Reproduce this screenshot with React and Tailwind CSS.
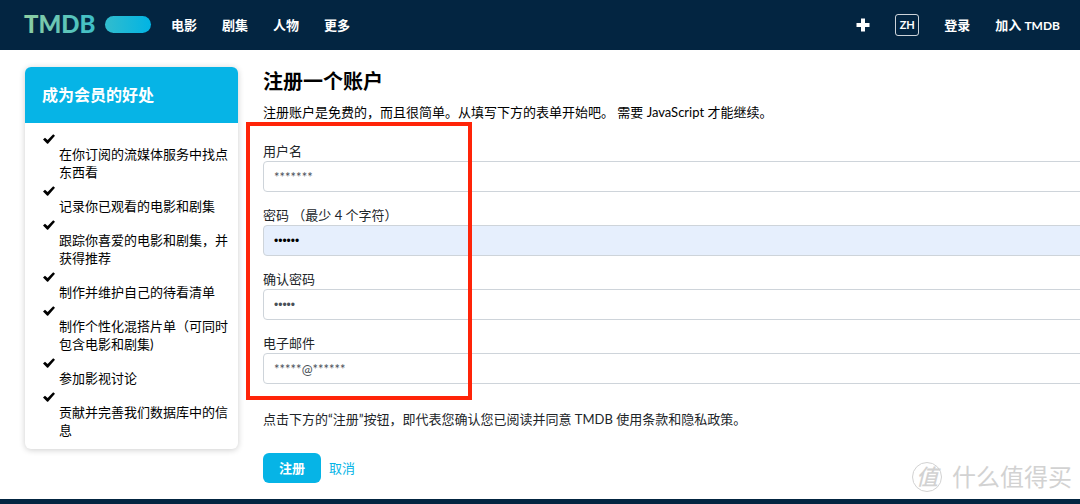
// src/App.jsx
const navLinks = ['电影', '剧集', '人物', '更多'];

const benefits = [
  '在你订阅的流媒体服务中找点东西看',
  '记录你已观看的电影和剧集',
  '跟踪你喜爱的电影和剧集，并获得推荐',
  '制作并维护自己的待看清单',
  '制作个性化混搭片单（可同时包含电影和剧集)',
  '参加影视讨论',
  '贡献并完善我们数据库中的信息',
];

const fields = [
  { id: 'username', label: '用户名', type: 'text', value: '*******' },
  { id: 'password', label: '密码 （最少 4 个字符）', type: 'password', value: '123456', filled: true },
  { id: 'password_confirm', label: '确认密码', type: 'password', value: '12345' },
  { id: 'email', label: '电子邮件', type: 'text', value: '*****@******' },
];

function Logo() {
  return (
    <svg width="127" height="24" viewBox="0 0 127 24" className="overflow-visible" role="img" aria-label="TMDB">
      <defs>
        <linearGradient id="logo" gradientUnits="userSpaceOnUse" x1="0" y1="0" x2="127" y2="0">
          <stop offset="0" stopColor="#90cea1" />
          <stop offset="0.56" stopColor="#3cbec9" />
          <stop offset="1" stopColor="#01b4e4" />
        </linearGradient>
      </defs>
      <text x="0" y="20" fontFamily="Lato, sans-serif" fontSize="24" fontWeight="900" fill="url(#logo)">
        TMDB
      </text>
      <rect x="81" y="3" width="46" height="17" rx="8.5" fill="url(#logo)" />
    </svg>
  );
}

function Check() {
  return (
    <svg width="12" height="10" viewBox="0 0 12 10" aria-hidden="true">
      <path d="M0 5.6 2 3.8 4.6 6 10.2.2 12 1.7 5 9.8H4.2z" />
    </svg>
  );
}

function Header() {
  return (
    <header className="flex h-[50px] items-center justify-between bg-[#032541] pl-6 pr-5 font-bold text-white">
      <div className="flex items-center gap-5">
        <a href="#"><Logo /></a>
        <nav className="flex gap-[25px]">
          {navLinks.map((link) => (
            <a key={link} href="#">{link}</a>
          ))}
        </nav>
      </div>
      <div className="flex items-center gap-[25px]">
        <button type="button" aria-label="添加">
          <svg width="14" height="14" viewBox="0 0 14 14" fill="#fff">
            <path d="M5 .5h4V5h4.5v4H9v4.5H5V9H.5V5H5z" />
          </svg>
        </button>
        <button type="button" className="h-[22px] w-6 rounded-[3px] border border-white/80 text-[11px] leading-5">
          ZH
        </button>
        <a href="#">登录</a>
        <a href="#">加入 <span className="text-xs">TMDB</span></a>
      </div>
    </header>
  );
}

function Benefits() {
  return (
    <aside className="w-[213px] shrink-0 self-start overflow-hidden rounded-md bg-white shadow-[0_1px_6px_rgba(0,0,0,0.2)]">
      <h3 className="bg-[#06b4e6] px-[17px] py-4 text-base leading-6 font-bold text-white">
        成为会员的好处
      </h3>
      <ul className="pt-1.5 pr-2 pb-2.5 pl-[18px]">
        {benefits.map((item) => (
          <li key={item}>
            <div className="flex h-4 items-center pt-1">
              <Check />
            </div>
            <p className="pl-4">{item}</p>
          </li>
        ))}
      </ul>
    </aside>
  );
}

function SignupForm() {
  return (
    <main className="min-w-0 flex-1">
      <h2 className="text-xl leading-7 font-bold">注册一个账户</h2>
      <p className="mt-2">
        注册账户是免费的，而且很简单。从填写下方的表单开始吧。 需要 JavaScript 才能继续。
      </p>

      <form className="mt-[21px] text-[#212529]">
        <div className="relative -mr-2 space-y-3.5">
          {fields.map((field) => (
            <div key={field.id}>
              <label htmlFor={field.id} className="block">{field.label}</label>
              <input
                id={field.id}
                type={field.type}
                defaultValue={field.value}
                className={`mt-px block h-[31px] w-full rounded border border-[#ced4da] px-2.5 ${
                  field.type === 'password' ? "font-['Liberation_Sans',sans-serif] text-xs" : ''
                } ${field.filled ? 'bg-[#e6effd] text-black' : 'bg-white text-[#495057]'}`}
              />
            </div>
          ))}
          <div className="pointer-events-none absolute -top-5 -bottom-4 -left-[17px] w-[226px] border-4 border-[#ff2408]" />
        </div>

        <p className="mt-[26px]">
          点击下方的“注册”按钮，即代表您确认您已阅读并同意 TMDB 使用条款和隐私政策。
        </p>
        <div className="mt-[25px] flex items-center gap-2">
          <button type="submit" className="h-[30px] rounded-md bg-[#06b4e6] px-4 font-bold text-white">
            注册
          </button>
          <a href="#" className="text-[#06b4e6]">取消</a>
        </div>
      </form>
    </main>
  );
}

export default function App() {
  return (
    <div
      lang="zh-CN"
      className="relative flex min-h-screen flex-col overflow-hidden bg-white font-[Lato,'Noto_Sans_CJK_SC',sans-serif] text-[13px] leading-[18px] text-black"
    >
      <Header />
      <div className="flex gap-[25px] pt-[17px] pb-4 pl-[25px]">
        <Benefits />
        <SignupForm />
      </div>
      <footer className="min-h-1 flex-1 bg-[#032541]" />

      <div className="pointer-events-none absolute right-2 bottom-3 flex items-center gap-2.5 text-[#d2d2d2]">
        <span className="flex size-[30px] items-center justify-center rounded-full border border-[#d2d2d2] text-[22px] font-medium italic">
          值
        </span>
        <span className="text-2xl leading-7">什么值得买</span>
      </div>
    </div>
  );
}
